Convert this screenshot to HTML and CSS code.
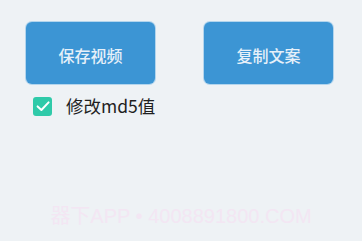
FILE: index.html
```html
<!DOCTYPE html>
<html lang="zh">
<head>
<meta charset="utf-8">
<link rel="stylesheet" href="styles.css">
</head>
<body>
<div class="page">
  <div class="actions">
    <button class="btn">保存视频</button>
    <button class="btn">复制文案</button>
  </div>
  <label class="option">
    <span class="check">
      <svg viewBox="0 0 18 18" width="18" height="18"><path d="M3.6 9.4 L7.4 13 L14.6 5.4" fill="none" stroke="#fff" stroke-width="2" stroke-linecap="round" stroke-linejoin="round"/></svg>
    </span>
    <span class="label">修改md5值</span>
  </label>
  <div class="watermark">器下APP • 4008891800.COM</div>
</div>
</body>
</html>
```
FILE: styles.css
```css
html, body {
  margin: 0;
  padding: 0;
  background: #eef2f5;
}
body {
  font-family: "Noto Sans CJK SC", "Noto Sans", sans-serif;
  width: 362px;
  height: 241px;
  overflow: hidden;
}
.page {
  display: flex;
  flex-direction: column;
  padding-top: 22px;
  height: 241px;
  box-sizing: border-box;
}
.actions {
  display: flex;
  gap: 49px;
  padding-left: 26px;
}
.btn {
  width: 129px;
  height: 62px;
  border: none;
  border-radius: 6px;
  background: #3c95d4;
  color: #e6f0f9;
  font-family: inherit;
  font-size: 16px;
  font-weight: 500;
  padding: 4px 0 0 0;
  box-shadow: 0 0 0 1px rgba(90, 170, 225, 0.4);
}
.option {
  display: flex;
  align-items: center;
  gap: 14px;
  margin-top: 12px;
  padding-left: 33px;
}
.check {
  width: 19px;
  height: 19px;
  border-radius: 3px;
  background: #2fcaa9;
  display: flex;
  align-items: center;
  justify-content: center;
}
.check svg {
  display: block;
}
.label {
  font-size: 17.5px;
  font-weight: 400;
  color: #1f1f1f;
  line-height: 20px;
}
.watermark {
  margin-top: auto;
  margin-bottom: 12px;
  text-align: center;
  font-family: "Liberation Sans", "Noto Sans CJK SC", sans-serif;
  font-size: 20px;
  color: #f3e6f3;
}
```
